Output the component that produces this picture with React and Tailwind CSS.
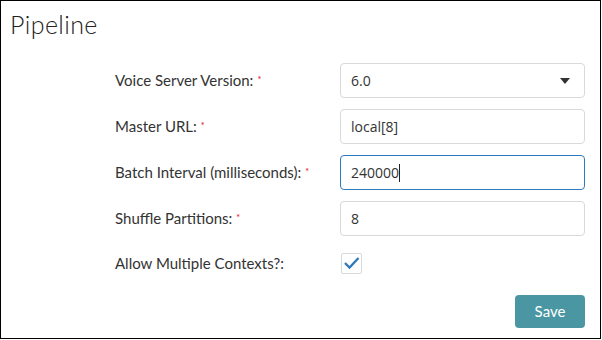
import { useState } from "react";

const fields = [
    { label: "Voice Server Version:", required: true, type: "select", value: "6.0" },
    { label: "Master URL:", required: true, type: "text", value: "local[8]" },
    { label: "Batch Interval (milliseconds):", required: true, type: "text", value: "240000", focus: true },
    { label: "Shuffle Partitions:", required: true, type: "text", value: "8" },
];

export default function App() {
    const [checked, setChecked] = useState(true);

    return (
        <div className="w-[601px] h-[339px] border border-black bg-white font-['Lato','Open_Sans',sans-serif] text-[#222]">
            <h1 className="pl-[9px] pt-[8px] text-[25px] tracking-[0.4px] font-light leading-[30px]">Pipeline</h1>
            <div className="mt-[24px] flex flex-col gap-[11px]">
                {fields.map((f, i) => (
                    <div key={i} className="flex items-center h-[35px]">
                        <label className="w-[225px] pl-[114px] text-[15px] text-[#333] whitespace-nowrap">
                            {f.label}
                            {f.required && <span className="relative top-[-3px] text-red-600 text-[9px] ml-[4px]">*</span>}
                        </label>
                        <div
                            className={
                                "ml-[114px] w-[245px] h-[35px] rounded-[4px] border flex items-center pl-[10px] pr-[14px] font-['Open_Sans',sans-serif] text-[14px] text-[#333] " +
                                (f.focus ? "border-[#2f7bc0]" : "border-[#d9d9d9]")
                            }
                        >
                            <span>{f.value}</span>
                            {f.focus && <span className="w-px h-[18px] bg-[#222]" />}
                            {f.type === "select" && (
                                <svg className="ml-auto" width="10" height="6" viewBox="0 0 10 6">
                                    <path d="M0 0h10L5 6z" fill="#333" />
                                </svg>
                            )}
                        </div>
                    </div>
                ))}
                <div className="flex items-center h-[32px]">
                    <label className="w-[225px] pl-[114px] text-[15px] text-[#333] whitespace-nowrap">Allow Multiple Contexts?:</label>
                    <button
                        onClick={() => setChecked(!checked)}
                        className="ml-[115px] w-[21px] h-[21px] border border-[#d9d9d9] rounded-[2px] flex items-center justify-center"
                    >
                        {checked && (
                            <svg width="17" height="14" viewBox="0 0 17 14">
                                <path d="M2 7l4.5 4.5L15.5 2" stroke="#2f79b9" strokeWidth="2.3" fill="none" />
                            </svg>
                        )}
                    </button>
                </div>
            </div>
            <div className="flex justify-end pr-[15px] mt-[16px]">
                <button className="w-[70px] h-[33px] rounded-[4px] bg-[#4a97a3] text-white text-[15px]">Save</button>
            </div>
        </div>
    );
}
